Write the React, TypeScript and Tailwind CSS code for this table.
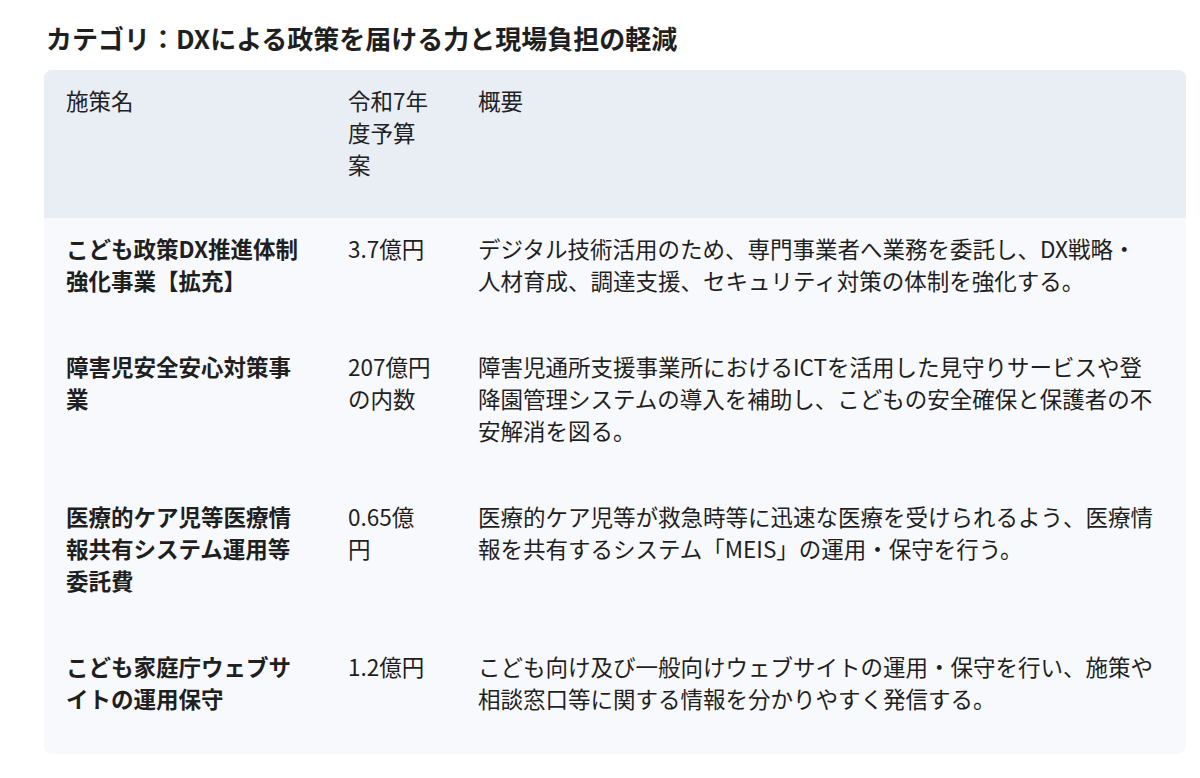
import React from 'react';

type Row = {
  name: string[];
  budget: string[];
  summary: string[];
};

const ROWS: Row[] = [
  {
    name: ['こども政策DX推進体制', '強化事業【拡充】'],
    budget: ['3.7億円'],
    summary: [
      'デジタル技術活用のため、専門事業者へ業務を委託し、DX戦略・',
      '人材育成、調達支援、セキュリティ対策の体制を強化する。',
    ],
  },
  {
    name: ['障害児安全安心対策事', '業'],
    budget: ['207億円', 'の内数'],
    summary: [
      '障害児通所支援事業所におけるICTを活用した見守りサービスや登',
      '降園管理システムの導入を補助し、こどもの安全確保と保護者の不',
      '安解消を図る。',
    ],
  },
  {
    name: ['医療的ケア児等医療情', '報共有システム運用等', '委託費'],
    budget: ['0.65億', '円'],
    summary: [
      '医療的ケア児等が救急時等に迅速な医療を受けられるよう、医療情',
      '報を共有するシステム「MEIS」の運用・保守を行う。',
    ],
  },
  {
    name: ['こども家庭庁ウェブサ', 'イトの運用保守'],
    budget: ['1.2億円'],
    summary: [
      'こども向け及び一般向けウェブサイトの運用・保守を行い、施策や',
      '相談窓口等に関する情報を分かりやすく発信する。',
    ],
  },
];

function Lines({ lines }: { lines: string[] }) {
  return (
    <>
      {lines.map((l, i) => (
        <React.Fragment key={i}>
          {i > 0 && <br />}
          {l}
        </React.Fragment>
      ))}
    </>
  );
}

export default function App() {
  return (
    <div
      className="min-h-[778px] bg-white px-[44px] pt-[20px] text-[#1f1f1f]"
      style={{ fontFamily: '"Noto Sans CJK JP", "Noto Sans", sans-serif' }}
    >
      <h2 className="pl-[2px] text-[26px] font-bold leading-[36px] text-[#1f1f1f]">
        カテゴリ：DXによる政策を届ける力と現場負担の軽減
      </h2>

      <div className="mt-[14px] w-[1142px] overflow-hidden rounded-[8px] bg-[#f8f9fc] text-[22.5px] leading-[32px]">
        {/* header */}
        <div className="grid grid-cols-[282px_130px_1fr] bg-[#e9edf4] text-[#202124]">
          <div className="pl-[22px] pr-[22px] pt-[14px] pb-[38px]">施策名</div>
          <div className="pl-[22px] pr-[22px] pt-[14px] pb-[38px]">
            <Lines lines={['令和7年', '度予算', '案']} />
          </div>
          <div className="pl-[22px] pr-[12px] pt-[14px] pb-[38px]">概要</div>
        </div>

        {/* rows */}
        {ROWS.map((r, i) => (
          <div key={i} className="grid grid-cols-[282px_130px_1fr]">
            <div className="pl-[22px] pr-[22px] pt-[14px] pb-[40px] font-bold text-[#1f1f1f]">
              <Lines lines={r.name} />
            </div>
            <div className="pl-[22px] pr-[22px] pt-[14px] pb-[40px] whitespace-nowrap">
              <Lines lines={r.budget} />
            </div>
            <div className="pl-[22px] pr-[12px] pt-[14px] pb-[40px] whitespace-nowrap">
              <Lines lines={r.summary} />
            </div>
          </div>
        ))}
      </div>
    </div>
  );
}
